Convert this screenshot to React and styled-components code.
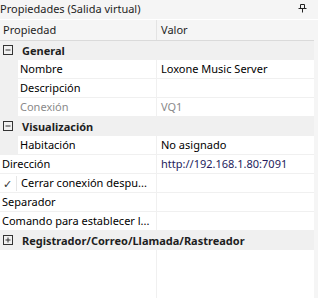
import React from "react";
import styled, { createGlobalStyle } from "styled-components";

const GlobalStyle = createGlobalStyle`
  html, body {
    margin: 0;
    padding: 0;
    background: #f5f5f5;
  }
  body {
    font-family: "Noto Sans", "Open Sans", sans-serif;
    font-size: 11px;
    color: #000;
  }
`;

const rows = [
  { type: "group", label: "General", open: true },
  { label: "Nombre", value: "Loxone Music Server", indent: true },
  { label: "Descripción", value: "", indent: true },
  { label: "Conexión", value: "VQ1", indent: true, disabled: true },
  { type: "group", label: "Visualización", open: true },
  { label: "Habitación", value: "No asignado", indent: true },
  { label: "Dirección", value: "http://192.168.1.80:7091", link: true },
  { label: "Cerrar conexión despu...", value: "", check: true },
  { label: "Separador", value: "" },
  { label: "Comando para establecer l...", value: "" },
  { type: "group", label: "Registrador/Correo/Llamada/Rastreador", open: false },
];

function Toggle({ open }) {
  return (
    <svg width="11" height="11" viewBox="0 0 11 11">
      <rect x="0.5" y="0.5" width="9" height="9" fill="none" stroke="#333" />
      <line x1="2.5" y1="5" x2="7.5" y2="5" stroke="#333" />
      {!open && <line x1="5" y1="2.5" x2="5" y2="7.5" stroke="#333" />}
    </svg>
  );
}

function App() {
  return (
    <>
      <GlobalStyle />
      <Panel>
        <TitleBar>
          <Title>Propiedades (Salida virtual)</Title>
          <svg width="9" height="9" viewBox="0 0 9 9">
            <path d="M2.5 0.5h4v4h-4z" fill="none" stroke="#222" />
            <path d="M0.5 4.5h8" stroke="#222" />
            <path d="M4.5 4.5v4" stroke="#222" />
          </svg>
        </TitleBar>
        <Grid>
          <HeaderRow>
            <HeaderCell>Propiedad</HeaderCell>
            <HeaderCell>Valor</HeaderCell>
          </HeaderRow>
          {rows.map((r, i) =>
            r.type === "group" ? (
              <GroupRow key={i}>
                <Toggle open={r.open} />
                <GroupLabel>{r.label}</GroupLabel>
              </GroupRow>
            ) : (
              <PropRow key={i}>
                <NameCell indent={r.indent || r.check} disabled={r.disabled}>
                  {r.check && <Check>✓</Check>}
                  {r.indent && <Gutter />}
                  <NameText>{r.label}</NameText>
                </NameCell>
                <ValueCell disabled={r.disabled} link={r.link}>
                  {r.value}
                </ValueCell>
              </PropRow>
            )
          )}
          <Filler>
            <div />
            <div />
          </Filler>
        </Grid>
      </Panel>
    </>
  );
}

export default App;

const Panel = styled.div`
  width: 318px;
  height: 298px;
  display: flex;
  flex-direction: column;
  overflow: hidden;
`;

const TitleBar = styled.div`
  height: 19px;
  display: flex;
  align-items: center;
  justify-content: space-between;
  padding: 0 11px 0 0;
  border-bottom: 1px solid #fff;
  svg {
    margin-top: -2px;
  }
`;

const Title = styled.div`
  color: #1e1e1e;
  line-height: 18px;
  margin-top: -1px;
`;

const Grid = styled.div`
  width: 314px;
  flex: 1;
  display: flex;
  flex-direction: column;
`;

const HeaderRow = styled.div`
  display: grid;
  grid-template-columns: 156px 1fr;
  height: 20px;
  border-bottom: 1px solid #dadada;
  background: #f5f5f5;
`;

const HeaderCell = styled.div`
  padding-left: 3px;
  line-height: 20px;
  color: #1e1e1e;
  & + & {
    border-left: 1px solid #e3e3e3;
    padding-left: 4px;
  }
`;

const GroupRow = styled.div`
  height: 19px;
  display: flex;
  align-items: center;
  gap: 8px;
  padding-left: 3px;
  background: #f0f0f0;
  svg {
    flex: none;
  }
`;

const GroupLabel = styled.div`
  font-weight: 700;
  color: #1e1e1e;
  white-space: nowrap;
  line-height: 18px;
`;

const PropRow = styled.div`
  display: grid;
  grid-template-columns: 156px 1fr;
  height: 19px;
  background: #fff;
  border-bottom: 1px solid #f0f0f0;
  box-sizing: border-box;
`;

const NameCell = styled.div`
  display: flex;
  align-items: center;
  padding-left: ${(p) => (p.indent ? "0" : "2px")};
  color: ${(p) => (p.disabled ? "#8a8a8a" : "#000")};
  white-space: nowrap;
  overflow: hidden;
`;

const Gutter = styled.div`
  width: 18px;
  align-self: stretch;
  background: #f0f0f0;
  margin-right: 2px;
  flex: none;
`;

const Check = styled.div`
  width: 13px;
  padding-left: 3px;
  margin-right: 4px;
  font-size: 11px;
  color: #333;
  flex: none;
  border-right: 1px solid #e6e6e6;
`;

const NameText = styled.div`
  line-height: 18px;
`;

const ValueCell = styled.div`
  border-left: 1px solid #f0f0f0;
  padding-left: 4px;
  line-height: 18px;
  white-space: nowrap;
  overflow: hidden;
  color: ${(p) => (p.disabled ? "#8a8a8a" : p.link ? "#241c5c" : "#000")};
`;

const Filler = styled.div`
  flex: 1;
  display: grid;
  grid-template-columns: 156px 1fr;
  background: #fff;
  div + div {
    border-left: 1px solid #f0f0f0;
  }
`;
